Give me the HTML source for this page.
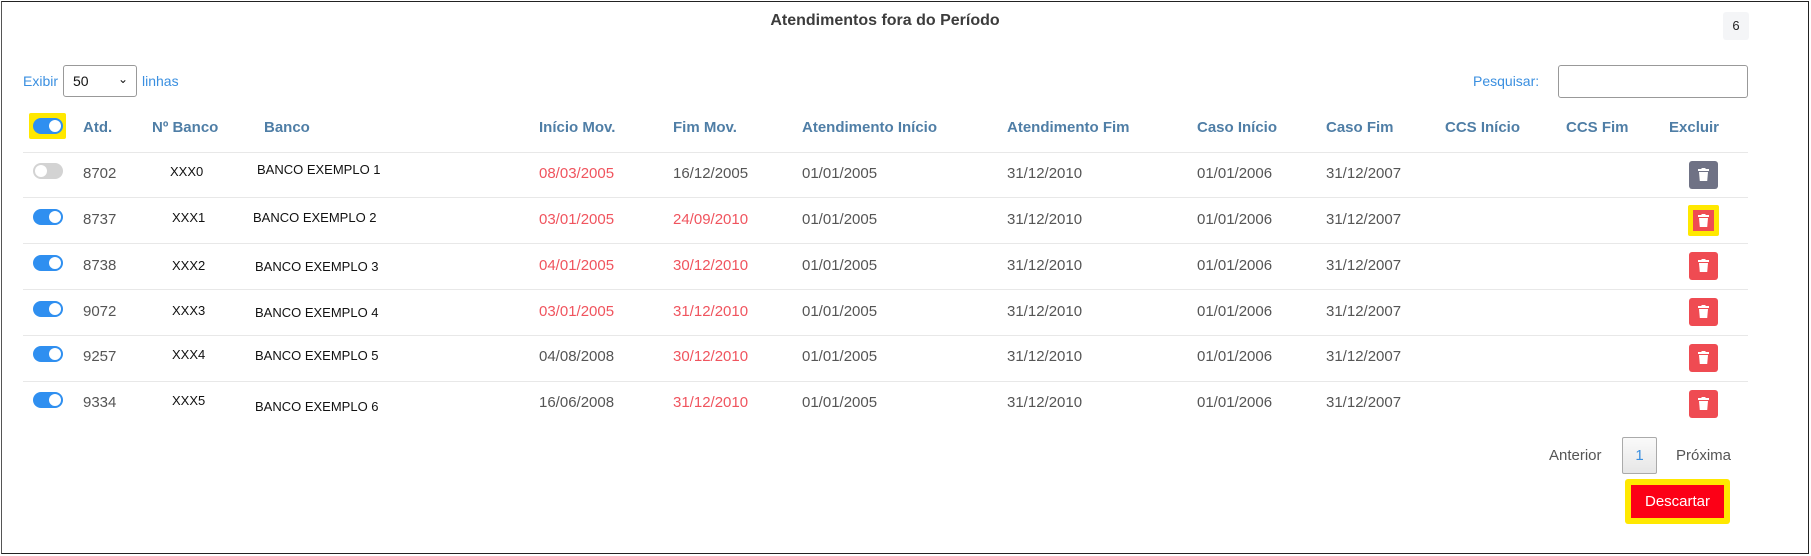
<!DOCTYPE html>
<html><head><meta charset="utf-8"><style>
*{box-sizing:border-box;margin:0;padding:0}
body{width:1811px;height:556px;background:#fff;font-family:"Liberation Sans",sans-serif;position:relative;overflow:hidden;color:#555}
.frame{position:absolute;left:1px;top:1px;width:1808px;height:553px;border:1.5px solid #222;border-left-color:#555}
.a{position:absolute;white-space:nowrap}
.h{font-weight:bold;color:#4f7ea6;font-size:15px;top:119px}
.t{font-size:15px;color:#555}
.r{color:#f0545e}
.b{font-size:13px;color:#111}
.sep{position:absolute;left:23px;width:1725px;height:1px;background:#e8e8e8}
.tg{position:absolute;width:30px;height:16px;border-radius:8px;background:#2f8ff0}
.tg:after{content:"";position:absolute;right:2px;top:2px;width:12px;height:12px;border-radius:50%;background:#fff}
.tg.off{background:#d3d3d3}.tg.off:after{left:2px;right:auto}
.del{position:absolute;left:1689px;width:29px;height:28px;border-radius:3px;background:#ef4b52}
.del svg{position:absolute;left:9px;top:7px}
</style></head><body>
<div class="frame"></div>
<div class="a" style="left:0;width:1770px;text-align:center;top:12px;font-size:16px;font-weight:bold;color:#3c3c3c">Atendimentos fora do Período</div>
<div class="a" style="left:1723px;top:12px;width:26px;height:28px;background:#f4f5f7;border-radius:3px;font-size:13px;color:#222;text-align:center;line-height:28px">6</div>
<div class="a" style="left:23px;top:73px;font-size:14px;color:#3a8fe0">Exibir</div>
<div class="a" style="left:63px;top:65px;width:74px;height:32px;border:1px solid #999;border-radius:3px;font-size:14px;color:#111;padding:7px 0 0 9px">50<span style="position:absolute;right:8px;top:6px;font-size:12px">&#8964;</span></div>
<div class="a" style="left:142px;top:73px;font-size:14px;color:#3a8fe0">linhas</div>
<div class="a" style="left:1473px;top:73px;font-size:14px;color:#3a8fe0">Pesquisar:</div>
<div class="a" style="left:1558px;top:65px;width:190px;height:33px;border:1px solid #999;border-radius:3px"></div>
<div class="a" style="left:29px;top:113px;width:37px;height:26px;background:#ffe800;border-radius:2px"></div>
<div class="tg" style="left:33px;top:118px"></div>
<div class="a h" style="left:83px">Atd.</div>
<div class="a h" style="left:152px">Nº Banco</div>
<div class="a h" style="left:264px">Banco</div>
<div class="a h" style="left:539px">Início Mov.</div>
<div class="a h" style="left:673px">Fim Mov.</div>
<div class="a h" style="left:802px">Atendimento Início</div>
<div class="a h" style="left:1007px">Atendimento Fim</div>
<div class="a h" style="left:1197px">Caso Início</div>
<div class="a h" style="left:1326px">Caso Fim</div>
<div class="a h" style="left:1445px">CCS Início</div>
<div class="a h" style="left:1566px">CCS Fim</div>
<div class="a h" style="left:1669px">Excluir</div>
<div class="sep" style="top:152px"></div>
<div class="sep" style="top:197px"></div>
<div class="sep" style="top:243px"></div>
<div class="sep" style="top:289px"></div>
<div class="sep" style="top:335px"></div>
<div class="sep" style="top:381px"></div>

<!-- rows -->
<div class="tg off" style="left:33px;top:163px"></div>
<div class="a t" style="left:83px;top:165px">8702</div><div class="a b" style="left:170px;top:164px">XXX0</div><div class="a b" style="left:257px;top:162px">BANCO EXEMPLO 1</div>
<div class="a t r" style="left:539px;top:165px">08/03/2005</div><div class="a t" style="left:673px;top:165px">16/12/2005</div>
<div class="a t" style="left:802px;top:165px">01/01/2005</div><div class="a t" style="left:1007px;top:165px">31/12/2010</div><div class="a t" style="left:1197px;top:165px">01/01/2006</div><div class="a t" style="left:1326px;top:165px">31/12/2007</div>
<div class="del" style="top:161px;background:#6f7285"><svg width="11" height="13" viewBox="0 0 11 13"><rect x="0" y="1" width="11" height="2" fill="#fff"/><rect x="3.5" y="0" width="4" height="1.5" fill="#fff"/><path d="M1 4h9l-.8 9H1.8z" fill="#fff"/></svg></div>

<div class="tg" style="left:33px;top:209px"></div>
<div class="a t" style="left:83px;top:211px">8737</div><div class="a b" style="left:172px;top:210px">XXX1</div><div class="a b" style="left:253px;top:210px">BANCO EXEMPLO 2</div>
<div class="a t r" style="left:539px;top:211px">03/01/2005</div><div class="a t r" style="left:673px;top:211px">24/09/2010</div>
<div class="a t" style="left:802px;top:211px">01/01/2005</div><div class="a t" style="left:1007px;top:211px">31/12/2010</div><div class="a t" style="left:1197px;top:211px">01/01/2006</div><div class="a t" style="left:1326px;top:211px">31/12/2007</div>
<div class="a" style="left:1688px;top:205px;width:31px;height:31px;background:#ffe800;border-radius:2px"></div>
<div class="del" style="top:210px;left:1693px;width:21px;height:21px;border-radius:0"><svg width="11" height="13" viewBox="0 0 11 13" style="left:5px;top:4px"><rect x="0" y="1" width="11" height="2" fill="#fff"/><rect x="3.5" y="0" width="4" height="1.5" fill="#fff"/><path d="M1 4h9l-.8 9H1.8z" fill="#fff"/></svg></div>

<div class="tg" style="left:33px;top:255px"></div>
<div class="a t" style="left:83px;top:257px">8738</div><div class="a b" style="left:172px;top:258px">XXX2</div><div class="a b" style="left:255px;top:259px">BANCO EXEMPLO 3</div>
<div class="a t r" style="left:539px;top:257px">04/01/2005</div><div class="a t r" style="left:673px;top:257px">30/12/2010</div>
<div class="a t" style="left:802px;top:257px">01/01/2005</div><div class="a t" style="left:1007px;top:257px">31/12/2010</div><div class="a t" style="left:1197px;top:257px">01/01/2006</div><div class="a t" style="left:1326px;top:257px">31/12/2007</div>
<div class="del" style="top:252px"><svg width="11" height="13" viewBox="0 0 11 13"><rect x="0" y="1" width="11" height="2" fill="#fff"/><rect x="3.5" y="0" width="4" height="1.5" fill="#fff"/><path d="M1 4h9l-.8 9H1.8z" fill="#fff"/></svg></div>

<div class="tg" style="left:33px;top:301px"></div>
<div class="a t" style="left:83px;top:303px">9072</div><div class="a b" style="left:172px;top:303px">XXX3</div><div class="a b" style="left:255px;top:305px">BANCO EXEMPLO 4</div>
<div class="a t r" style="left:539px;top:303px">03/01/2005</div><div class="a t r" style="left:673px;top:303px">31/12/2010</div>
<div class="a t" style="left:802px;top:303px">01/01/2005</div><div class="a t" style="left:1007px;top:303px">31/12/2010</div><div class="a t" style="left:1197px;top:303px">01/01/2006</div><div class="a t" style="left:1326px;top:303px">31/12/2007</div>
<div class="del" style="top:298px"><svg width="11" height="13" viewBox="0 0 11 13"><rect x="0" y="1" width="11" height="2" fill="#fff"/><rect x="3.5" y="0" width="4" height="1.5" fill="#fff"/><path d="M1 4h9l-.8 9H1.8z" fill="#fff"/></svg></div>

<div class="tg" style="left:33px;top:346px"></div>
<div class="a t" style="left:83px;top:348px">9257</div><div class="a b" style="left:172px;top:347px">XXX4</div><div class="a b" style="left:255px;top:348px">BANCO EXEMPLO 5</div>
<div class="a t" style="left:539px;top:348px">04/08/2008</div><div class="a t r" style="left:673px;top:348px">30/12/2010</div>
<div class="a t" style="left:802px;top:348px">01/01/2005</div><div class="a t" style="left:1007px;top:348px">31/12/2010</div><div class="a t" style="left:1197px;top:348px">01/01/2006</div><div class="a t" style="left:1326px;top:348px">31/12/2007</div>
<div class="del" style="top:344px"><svg width="11" height="13" viewBox="0 0 11 13"><rect x="0" y="1" width="11" height="2" fill="#fff"/><rect x="3.5" y="0" width="4" height="1.5" fill="#fff"/><path d="M1 4h9l-.8 9H1.8z" fill="#fff"/></svg></div>

<div class="tg" style="left:33px;top:392px"></div>
<div class="a t" style="left:83px;top:394px">9334</div><div class="a b" style="left:172px;top:393px">XXX5</div><div class="a b" style="left:255px;top:399px">BANCO EXEMPLO 6</div>
<div class="a t" style="left:539px;top:394px">16/06/2008</div><div class="a t r" style="left:673px;top:394px">31/12/2010</div>
<div class="a t" style="left:802px;top:394px">01/01/2005</div><div class="a t" style="left:1007px;top:394px">31/12/2010</div><div class="a t" style="left:1197px;top:394px">01/01/2006</div><div class="a t" style="left:1326px;top:394px">31/12/2007</div>
<div class="del" style="top:390px"><svg width="11" height="13" viewBox="0 0 11 13"><rect x="0" y="1" width="11" height="2" fill="#fff"/><rect x="3.5" y="0" width="4" height="1.5" fill="#fff"/><path d="M1 4h9l-.8 9H1.8z" fill="#fff"/></svg></div>

<div class="a t" style="left:1549px;top:447px">Anterior</div>
<div class="a" style="left:1622px;top:437px;width:35px;height:37px;border:1px solid #aaa;border-radius:2px;background:linear-gradient(#fafafa,#e6e6e6);color:#3a8fe0;font-size:15px;text-align:center;line-height:35px">1</div>
<div class="a t" style="left:1676px;top:447px">Próxima</div>
<div class="a" style="left:1625px;top:479px;width:105px;height:45px;background:#ffe800;border-radius:3px"></div>
<div class="a" style="left:1631px;top:485px;width:93px;height:33px;background:#fc0016;color:#fff;font-size:15px;text-align:center;line-height:33px">Descartar</div>
</body></html>
